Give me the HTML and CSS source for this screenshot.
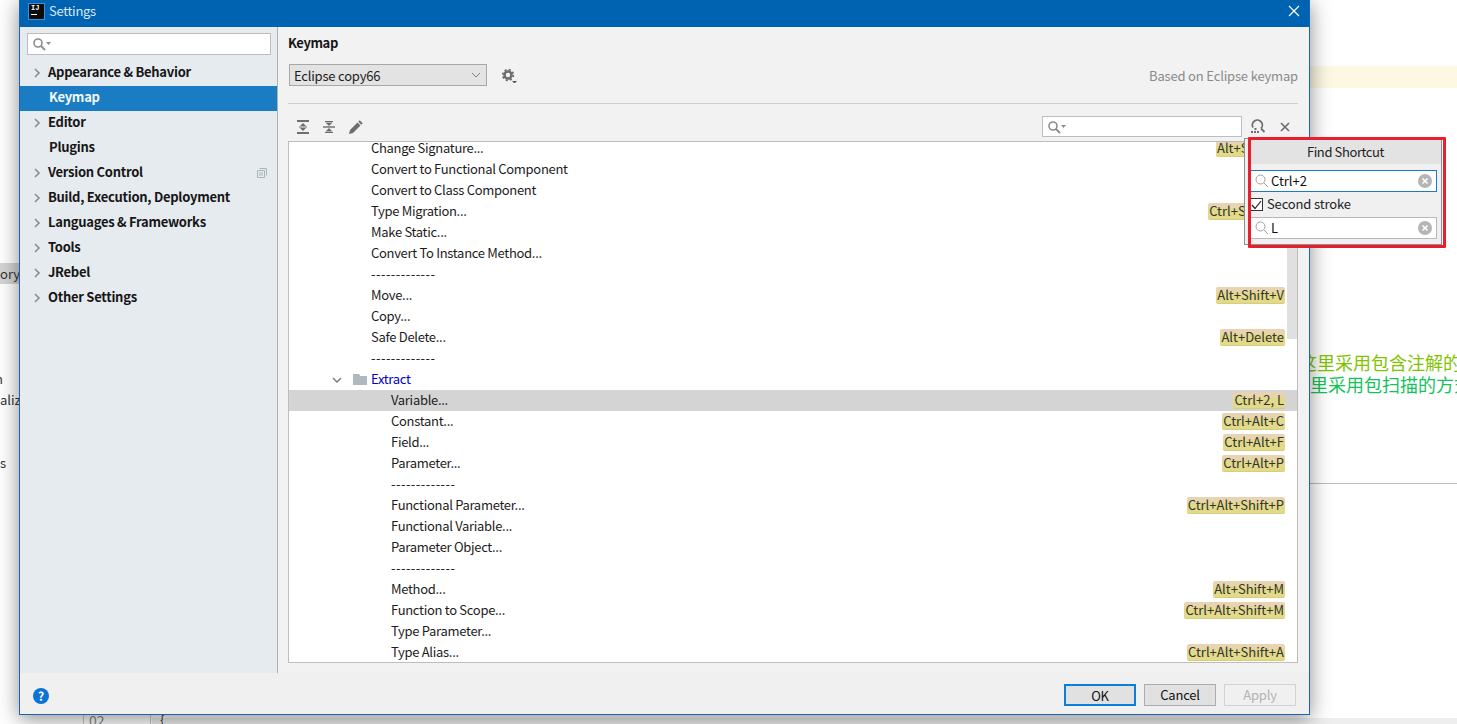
FILE: index.html
```html
<!DOCTYPE html>
<html lang="en">
<head>
<meta charset="utf-8">
<title>Settings</title>
<link rel="stylesheet" href="styles.css">
</head>
<body>
<div class="desktop">
  <div class="bg-band"></div>
  <div class="bg-ory">ory</div>
  <div class="bg-frag f1">n</div>
  <div class="bg-frag f2">aliz</div>
  <div class="bg-frag f3">s</div>
  <div class="bg-cn c1">这里采用包含注解的</div>
  <div class="bg-cn c2">里采用包扫描的方式</div>
  <div class="bg-line"></div>
  <div class="bg-bottom"></div>
  <div class="bg-gutter">02</div>
  <div class="bg-brace">{</div>
  <div class="dialog">
    <header class="titlebar">
      <div class="logo"><span class="logo-t">IJ</span><span class="logo-u"></span></div>
      <span class="title">Settings</span>
      <svg class="close" width="12" height="12" viewBox="0 0 12 12"><path d="M1 1l10 10M11 1L1 11" stroke="#fff" stroke-width="1.2" fill="none"/></svg>
    </header>
    <div class="body">
      <aside class="sidebar">
        <div class="searchbox side-search">
          <svg width="20" height="14" viewBox="0 0 20 14"><circle cx="6" cy="6" r="4" fill="none" stroke="#8c8c8c" stroke-width="1.6"/><path d="M9 9l4 4" stroke="#8c8c8c" stroke-width="1.8"/><path d="M14 5h5l-2.500 3z" fill="#8c8c8c"/></svg>
        </div>
        <nav class="nav">
          <div class="nav-item"><svg class="chev" width="8" height="10" viewBox="0 0 8 10"><path d="M2 1l4 4-4 4" fill="none" stroke="#8c8c8c" stroke-width="1.6"/></svg><span>Appearance &amp; Behavior</span></div>
          <div class="nav-item selected"><span>Keymap</span></div>
          <div class="nav-item"><svg class="chev" width="8" height="10" viewBox="0 0 8 10"><path d="M2 1l4 4-4 4" fill="none" stroke="#8c8c8c" stroke-width="1.6"/></svg><span>Editor</span></div>
          <div class="nav-item leaf"><span>Plugins</span></div>
          <div class="nav-item"><svg class="chev" width="8" height="10" viewBox="0 0 8 10"><path d="M2 1l4 4-4 4" fill="none" stroke="#8c8c8c" stroke-width="1.6"/></svg><span>Version Control</span><svg class="copy" width="10" height="10" viewBox="0 0 10 10"><path d="M2.500 .5h7v7M.5 2.500h7v7h-7z" fill="none" stroke="#a9b4bd"/><path d="M2 5h4M2 7h4" stroke="#a9b4bd"/></svg></div>
          <div class="nav-item"><svg class="chev" width="8" height="10" viewBox="0 0 8 10"><path d="M2 1l4 4-4 4" fill="none" stroke="#8c8c8c" stroke-width="1.6"/></svg><span>Build, Execution, Deployment</span></div>
          <div class="nav-item"><svg class="chev" width="8" height="10" viewBox="0 0 8 10"><path d="M2 1l4 4-4 4" fill="none" stroke="#8c8c8c" stroke-width="1.6"/></svg><span>Languages &amp; Frameworks</span></div>
          <div class="nav-item"><svg class="chev" width="8" height="10" viewBox="0 0 8 10"><path d="M2 1l4 4-4 4" fill="none" stroke="#8c8c8c" stroke-width="1.6"/></svg><span>Tools</span></div>
          <div class="nav-item"><svg class="chev" width="8" height="10" viewBox="0 0 8 10"><path d="M2 1l4 4-4 4" fill="none" stroke="#8c8c8c" stroke-width="1.6"/></svg><span>JRebel</span></div>
          <div class="nav-item"><svg class="chev" width="8" height="10" viewBox="0 0 8 10"><path d="M2 1l4 4-4 4" fill="none" stroke="#8c8c8c" stroke-width="1.6"/></svg><span>Other Settings</span></div>
        </nav>
      </aside>
      <main class="content">
        <h1 class="heading">Keymap</h1>
        <div class="keymap-row">
          <div class="combo"><span>Eclipse copy66</span><svg width="10" height="6" viewBox="0 0 10 6"><path d="M1 1l4 4 4-4" fill="none" stroke="#7f7f7f"/></svg></div>
          <svg class="gear" width="16" height="16" viewBox="0 0 16 16"><circle cx="7" cy="8" r="3.500" fill="none" stroke="#6e6e6e" stroke-width="2.600"/><circle cx="7" cy="8" r="5.300" fill="none" stroke="#6e6e6e" stroke-width="1.800" stroke-dasharray="2.080 2.080"/><path d="M11 14h5l-2.500 2.500z" fill="#555"/></svg>
          <span class="based">Based on Eclipse keymap</span>
        </div>
        <div class="rule"></div>
        <div class="toolbar">
          <svg class="tool" width="14" height="14" viewBox="0 0 14 14"><path d="M0 1h12M0 13h12" stroke="#6e6e6e" stroke-width="2"/><path d="M2 7h8" stroke="#6e6e6e"/><path d="M6 3l3 3H3zM6 11l3-3H3z" fill="#6e6e6e"/></svg>
          <svg class="tool" width="14" height="14" viewBox="0 0 14 14"><path d="M2 1.500h8M2 12.500h8" stroke="#6e6e6e"/><path d="M0 7h12" stroke="#6e6e6e" stroke-width="1.400"/><path d="M6 6L9.500 2.500h-7zM6 8l3.500 3.500h-7z" fill="#6e6e6e"/></svg>
          <svg class="tool" width="14" height="14" viewBox="0 0 14 14"><path d="M0 14l1-4 7.500-7.500 3 3L4 13z" fill="#6e6e6e"/><path d="M10 1l3 3" stroke="#6e6e6e" stroke-width="2"/></svg>
          <div class="searchbox key-search">
            <svg width="20" height="14" viewBox="0 0 20 14"><circle cx="6" cy="6" r="4" fill="none" stroke="#8c8c8c" stroke-width="1.600"/><path d="M9 9l4 4" stroke="#8c8c8c" stroke-width="1.800"/><path d="M14 5h5l-2.500 3z" fill="#8c8c8c"/></svg>
          </div>
          <svg class="find-icon" width="16" height="15" viewBox="0 0 16 15"><path d="M3 8.500A5 5 0 1 1 11 9.500" fill="none" stroke="#6e6e6e" stroke-width="1.800"/><path d="M11 9.500l3.500 3.500" stroke="#6e6e6e" stroke-width="1.800"/><path d="M1 12h2v2H1zM4 12h2v2H4zM7 12h2v2H7zM4.500 9h2v2h-2z" fill="#6e6e6e"/></svg>
          <svg class="x-icon" width="10" height="10" viewBox="0 0 10 10"><path d="M1 1l8 8M9 1L1 9" stroke="#6e6e6e" stroke-width="1.700"/></svg>
        </div>
        <div class="tree">
          <div class="tree-scroll">
            <div class="row l1"><span>Change Signature...</span><span class="kbd">Alt+Shift+S</span></div>
            <div class="row l1"><span>Convert to Functional Component</span></div>
            <div class="row l1"><span>Convert to Class Component</span></div>
            <div class="row l1"><span>Type Migration...</span><span class="kbd">Ctrl+Shift+M</span></div>
            <div class="row l1"><span>Make Static...</span></div>
            <div class="row l1"><span>Convert To Instance Method...</span></div>
            <div class="row l1 dash"><span>-------------</span></div>
            <div class="row l1"><span>Move...</span><span class="kbd">Alt+Shift+V</span></div>
            <div class="row l1"><span>Copy...</span></div>
            <div class="row l1"><span>Safe Delete...</span><span class="kbd">Alt+Delete</span></div>
            <div class="row l1 dash"><span>-------------</span></div>
            <div class="row folder">
              <svg class="fold-chev" width="10" height="6" viewBox="0 0 10 6"><path d="M1 1l4 4 4-4" fill="none" stroke="#7f7f7f" stroke-width="1.500"/></svg>
              <svg class="fold-icon" width="14" height="11" viewBox="0 0 14 11"><path d="M0 0h6l1.500 2H14v9H0z" fill="#aeb9c0"/></svg>
              <span>Extract</span>
            </div>
            <div class="row l2 active"><span>Variable...</span><span class="kbd">Ctrl+2, L</span></div>
            <div class="row l2"><span>Constant...</span><span class="kbd">Ctrl+Alt+C</span></div>
            <div class="row l2"><span>Field...</span><span class="kbd">Ctrl+Alt+F</span></div>
            <div class="row l2"><span>Parameter...</span><span class="kbd">Ctrl+Alt+P</span></div>
            <div class="row l2 dash"><span>-------------</span></div>
            <div class="row l2"><span>Functional Parameter...</span><span class="kbd">Ctrl+Alt+Shift+P</span></div>
            <div class="row l2"><span>Functional Variable...</span></div>
            <div class="row l2"><span>Parameter Object...</span></div>
            <div class="row l2 dash"><span>-------------</span></div>
            <div class="row l2"><span>Method...</span><span class="kbd">Alt+Shift+M</span></div>
            <div class="row l2"><span>Function to Scope...</span><span class="kbd">Ctrl+Alt+Shift+M</span></div>
            <div class="row l2"><span>Type Parameter...</span></div>
            <div class="row l2"><span>Type Alias...</span><span class="kbd">Ctrl+Alt+Shift+A</span></div>
          </div>
          <div class="thumb"></div>
        </div>
      </main>
    </div>
    <footer class="footer">
      <div class="help">?</div>
      <div class="buttons">
        <button class="btn primary">OK</button>
        <button class="btn">Cancel</button>
        <button class="btn disabled">Apply</button>
      </div>
    </footer>
    <div class="popup">
      <div class="popup-title">Find Shortcut</div>
      <div class="field focused">
        <svg width="14" height="14" viewBox="0 0 14 14"><circle cx="5.500" cy="5.500" r="4.500" fill="none" stroke="#a0a0a0"/><path d="M9 9l4 4" stroke="#a0a0a0"/></svg>
        <span class="field-text">Ctrl+2</span>
        <span class="clear"><svg width="14" height="14" viewBox="0 0 14 14"><circle cx="7" cy="7" r="7" fill="#b5b5b5"/><path d="M4.500 4.500l5 5M9.500 4.500l-5 5" stroke="#fff" stroke-width="1.600"/></svg></span>
      </div>
      <label class="check-row">
        <span class="checkbox"><svg width="11" height="10" viewBox="0 0 11 10"><path d="M1 5l3 3.500L10 1" fill="none" stroke="#222" stroke-width="1.200"/></svg></span>
        <span class="check-label">Second stroke</span>
      </label>
      <div class="field">
        <svg width="14" height="14" viewBox="0 0 14 14"><circle cx="5.500" cy="5.500" r="4.500" fill="none" stroke="#a0a0a0"/><path d="M9 9l4 4" stroke="#a0a0a0"/></svg>
        <span class="field-text">L</span>
        <span class="clear"><svg width="14" height="14" viewBox="0 0 14 14"><circle cx="7" cy="7" r="7" fill="#b5b5b5"/><path d="M4.500 4.500l5 5M9.500 4.500l-5 5" stroke="#fff" stroke-width="1.600"/></svg></span>
      </div>
    </div>
    <div class="annot"></div>
  </div>
</div>
</body>
</html>
```
FILE: styles.css
```css
* { box-sizing: border-box; }
html, body { margin: 0; padding: 0; height: 100%; overflow: hidden; background: #fff; }
body { font-family: "Noto Sans CJK SC", "Noto Sans", sans-serif; font-size: 13px; color: #1c1c1c; }
.desktop { position: relative; width: 1457px; height: 724px; overflow: hidden; background: #fff; }

.bg-band { position: absolute; left: 1310px; top: 66px; width: 147px; height: 22px; background: #fdf8e4; }
.bg-ory { position: absolute; left: 0; top: 263px; width: 19px; height: 21px; background: #d4d4d4; line-height: 21px; color: #333; text-align: right; overflow: hidden; }
.bg-frag { position: absolute; left: 0; width: 19px; line-height: 21px; color: #333; overflow: hidden; white-space: nowrap; }
.f1 { top: 368px; text-indent: -5px; }
.f2 { top: 389px; }
.f3 { top: 452px; }
.bg-cn { position: absolute; white-space: nowrap; width: 147px; overflow: hidden; font-size: 18px; line-height: 22px; }
.c1 { left: 1310px; top: 351px; color: #7fc400; text-indent: -11px; }
.c2 { left: 1310px; top: 373px; color: #14c25a; }
.bg-line { position: absolute; left: 1310px; top: 483px; width: 147px; height: 1px; background: #bdbdbd; }
.bg-bottom { position: absolute; left: 152px; top: 718px; width: 1305px; height: 6px; background: #eeeeee; }
.bg-gutter { position: absolute; left: 83px; top: 715px; width: 68px; height: 9px; border-left: 1px solid #c8c8c8; border-right: 1px solid #c8c8c8; background: #fff; padding-left: 5px; line-height: 10px; color: #888; overflow: hidden; font-size: 14px; }
.bg-brace { position: absolute; left: 160px; top: 713px; color: #333; line-height: 14px; font-size: 13px; }

.dialog { position: absolute; left: 19px; top: -1px; width: 1291px; height: 716px; display: flex; flex-direction: column; background: #f2f2f2; border: 1px solid #1a66ae; box-shadow: 0 4px 20px rgba(0,0,0,.45); }

.titlebar { flex: none; height: 27px; background: #0063b1; display: flex; align-items: center; padding: 0 9px 5px 9px; color: #d9e8f5; }
.logo { width: 15px; height: 15px; background: #0c0c0c; outline: 1px solid #3f8fe0; position: relative; flex: none; display: flex; flex-direction: column; padding: 1px 2px; }
.logo-t { font-size: 7px; line-height: 7px; font-weight: 700; color: #fff; font-family: "Liberation Mono", monospace; }
.logo-u { width: 6px; height: 1px; background: #fff; margin-top: 2px; }
.title { margin-left: 5px; font-size: 13px; line-height: 18px; letter-spacing: -.3px; }
.close { margin-left: auto; }

.body { flex: 1; display: flex; min-height: 0; }
.sidebar { width: 258px; flex: none; background: #e6ebf0; border-right: 1px solid #b0b0b0; padding: 6px 0 0; display: flex; flex-direction: column; }
.searchbox { background: #fff; border: 1px solid #bdbdbd; height: 22px; display: flex; align-items: center; padding-left: 4px; }
.side-search { margin: 0 6px 0 7px; }
.nav { margin-top: 6px; display: flex; flex-direction: column; }
.nav-item { height: 25px; display: flex; align-items: center; padding: 0 10px 2px 13px; font-weight: 700; font-size: 13px; color: #161616; letter-spacing: -.27px; }
.nav-item span { margin-left: 7px; margin-bottom: 2px; }
.nav-item.selected { background: #1a7dc4; color: #f2f8fc; padding-left: 29px; }
.nav-item.selected span, .nav-item.leaf span { margin-left: 0; }
.nav-item.leaf { padding-left: 29px; }
.chev { flex: none; }
.copy { margin-left: auto; }

.content { flex: 1; min-width: 0; display: flex; flex-direction: column; padding: 0 11px 10px 10px; }
.heading { margin: 7px 0 0; font-size: 13px; line-height: 18px; font-weight: 700; color: #161616; letter-spacing: -.4px; }
.keymap-row { display: flex; align-items: center; margin-top: 12px; height: 22px; padding-left: 1px; }
.combo { width: 198px; height: 22px; background: #e3e3e3; border: 1px solid #a8a8a8; display: flex; align-items: center; justify-content: space-between; padding: 0 5px 0 4px; letter-spacing: -.2px; }
.gear { margin-left: 14px; }
.based { margin-left: auto; color: #8a8a8a; letter-spacing: -.17px; }
.rule { height: 1px; background: #cfcfcf; margin-top: 17px; }
.toolbar { display: flex; align-items: center; height: 37px; padding: 8px 8px 0 9px; flex: none; }
.tool { margin-right: 12px; }
.key-search { width: 200px; height: 21px; margin-left: auto; }
.find-icon { margin-left: 8px; }
.x-icon { margin-left: 14px; }

.tree { position: relative; flex: 1; min-height: 0; background: #fff; border: 1px solid #bdbdbd; overflow: hidden; }
.tree-scroll { margin-top: -4px; }
.row { height: 21px; display: flex; align-items: center; justify-content: space-between; padding-right: 12px; color: #1c1c1c; white-space: nowrap; letter-spacing: -.3px; }
.row > span { margin-bottom: 2px; }
.row.dash { letter-spacing: .45px; }
.l1 { padding-left: 82px; }
.l2 { padding-left: 102px; }
.folder { padding-left: 43px; justify-content: flex-start; color: #0000c8; }
.fold-icon { margin-left: 11px; margin-right: 4px; }
.active { background: #d4d4d4; }
.row > .kbd { margin-bottom: 0; }
.kbd { background: linear-gradient(#e9d4b2 0 4px, #e2da88 6px 100%); border-bottom: 1px solid #d6ce7c; border-radius: 2px; padding: 0 1px; line-height: 16px; height: 17px; color: #333; letter-spacing: 0; }
.thumb { position: absolute; right: 0; top: 0; width: 10px; height: 197px; background: #e0e0e0; }

.footer { flex: none; height: 41px; display: flex; align-items: center; padding: 0 13px 0 13px; background: #f0f0f0; }
.help { width: 16px; height: 16px; border-radius: 50%; background: #0b72d6; color: #fff; text-align: center; line-height: 16px; font-size: 12px; font-weight: 700; margin-top: 4px; }
.buttons { margin-left: auto; display: flex; gap: 8px; margin-top: 2px; }
.btn { width: 72px; height: 22px; font: inherit; background: #e1e1e1; border: 1px solid #adadad; color: #111; padding: 0; letter-spacing: -.2px; }
.btn.primary { border: 2px solid #0a7ed8; }
.btn.disabled { background: #f0f0f0; border-color: #d3d3d3; color: #b3b3b3; }

.popup { position: absolute; left: 1224px; top: 138px; width: 198px; height: 107px; background: #f0f0f0; border: 1px solid #8f8f8f; z-index: 2; }
.popup-title { height: 25px; margin-left: 5px; background: #e3e3e3; text-align: center; line-height: 26px; color: #222; letter-spacing: -.4px; }
.field { display: flex; align-items: center; margin: 6px 5px 0 5px; height: 22px; background: #fff; border: 1px solid #b8b8b8; padding: 0 4px 0 4px; color: #111; width: 187px; }
.field.focused { border-color: #1a7dc4; }
.field-text { margin-left: 2px; margin-bottom: 2px; }
.clear { margin-left: auto; display: flex; }
.check-row { display: flex; align-items: center; margin: 2px 0 0 5px; height: 22px; color: #222; padding-bottom: 1px; }
.check-label { margin-bottom: 2px; letter-spacing: -.15px; }
.check-row + .field { margin-top: 1px; }
.checkbox { width: 13px; height: 13px; border: 1px solid #333; background: #fff; display: flex; align-items: center; justify-content: center; margin-right: 4px; }
.annot { position: absolute; left: 1228px; top: 137px; width: 198px; height: 111px; border: 3px solid #e8202e; z-index: 3; pointer-events: none; border-radius: 1px; }
```
